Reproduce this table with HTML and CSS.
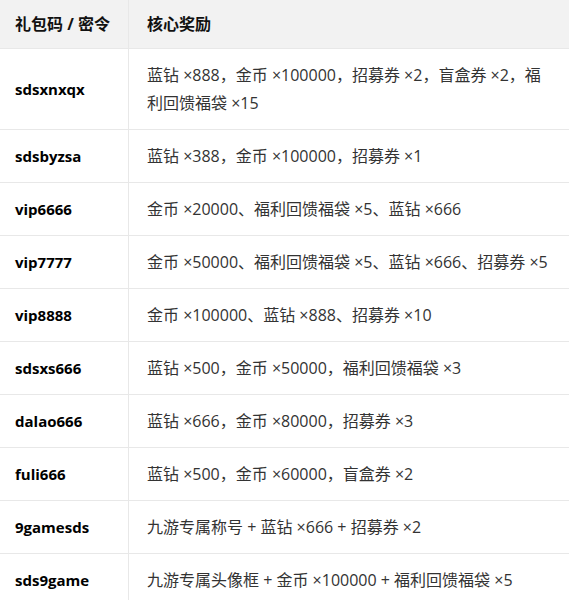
FILE: index.html
```html
<!DOCTYPE html>
<html lang="zh-CN">
<head>
<meta charset="utf-8">
<link rel="stylesheet" href="styles.css">
</head>
<body>
<table class="codes">
  <thead>
    <tr><th class="c1">礼包码 / 密令</th><th class="c2">核心奖励</th></tr>
  </thead>
  <tbody>
    <tr><td class="c1">sdsxnxqx</td><td class="c2">蓝钻 ×888，金币 ×100000，招募券 ×2，盲盒券 ×2，福利回馈福袋 ×15</td></tr>
    <tr><td class="c1">sdsbyzsa</td><td class="c2">蓝钻 ×388，金币 ×100000，招募券 ×1</td></tr>
    <tr><td class="c1">vip6666</td><td class="c2">金币 ×20000、福利回馈福袋 ×5、蓝钻 ×666</td></tr>
    <tr><td class="c1">vip7777</td><td class="c2">金币 ×50000、福利回馈福袋 ×5、蓝钻 ×666、招募券 ×5</td></tr>
    <tr><td class="c1">vip8888</td><td class="c2">金币 ×100000、蓝钻 ×888、招募券 ×10</td></tr>
    <tr><td class="c1">sdsxs666</td><td class="c2">蓝钻 ×500，金币 ×50000，福利回馈福袋 ×3</td></tr>
    <tr><td class="c1">dalao666</td><td class="c2">蓝钻 ×666，金币 ×80000，招募券 ×3</td></tr>
    <tr><td class="c1">fuli666</td><td class="c2">蓝钻 ×500，金币 ×60000，盲盒券 ×2</td></tr>
    <tr><td class="c1">9gamesds</td><td class="c2">九游专属称号 + 蓝钻 ×666 + 招募券 ×2</td></tr>
    <tr><td class="c1">sds9game</td><td class="c2">九游专属头像框 + 金币 ×100000 + 福利回馈福袋 ×5</td></tr>
  </tbody>
</table>
</body>
</html>
```

FILE: styles.css
```css
html, body {
  margin: 0;
  padding: 0;
  background: #fff;
}
body {
  font-family: "Open Sans", "Noto Sans CJK SC", sans-serif;
  font-size: 16px;
  color: #333;
}
.codes {
  width: 569px;
  border-collapse: collapse;
  table-layout: fixed;
}
.codes th, .codes td {
  line-height: 28px;
  text-align: left;
  vertical-align: middle;
  border-bottom: 1px solid #e8e8e8;
}
.codes th {
  background: #f2f2f2;
  color: #111;
  font-weight: bold;
  height: 28px;
  padding: 10px 0;
  font-size: 16px;
}
.codes td {
  padding: 12px 0;
}
.c1 {
  width: 113px;
  padding-left: 15px !important;
  border-right: 1px solid #e8e8e8;
}
td.c1 {
  font-weight: bold;
  color: #000;
  font-size: 15px;
}
.c2 {
  padding-left: 18px !important;
  padding-right: 16px !important;
}
```
